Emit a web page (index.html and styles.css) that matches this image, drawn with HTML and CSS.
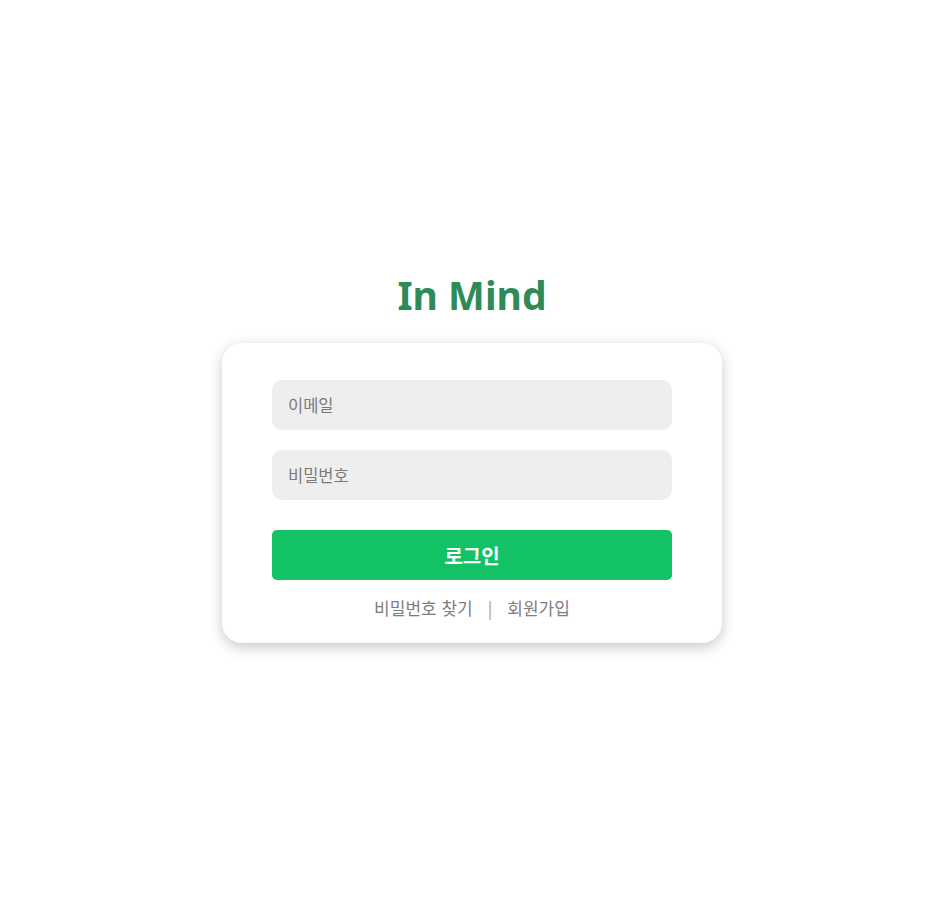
FILE: index.html
```html
<!DOCTYPE html>
<html lang="ko">
<head>
<meta charset="utf-8">
<title>In Mind</title>
<link rel="stylesheet" href="styles.css">
</head>
<body>
<main class="page">
  <h1 class="title">In Mind</h1>
  <form class="card">
    <input class="field" type="email" placeholder="이메일">
    <input class="field" type="password" placeholder="비밀번호">
    <button class="login" type="button">로그인</button>
    <div class="links">
      <a href="#" class="link">비밀번호 찾기</a>
      <span class="sep">|</span>
      <a href="#" class="link">회원가입</a>
    </div>
  </form>
</main>
</body>
</html>
```
FILE: styles.css
```css
* { box-sizing: border-box; }
html, body { margin: 0; padding: 0; background: #fff; }
body {
  font-family: "Noto Sans CJK KR", "Noto Sans", sans-serif;
  height: 914px;
}
.page {
  height: 914px;
  display: flex;
  flex-direction: column;
  align-items: center;
  padding-top: 266px;
}
.title {
  margin: 0 0 20px;
  font-size: 39px;
  line-height: 57px;
  font-weight: 700;
  color: #2e8b57;
  font-family: "Noto Sans", "Noto Sans CJK KR", sans-serif;
}
.card {
  width: 500px;
  height: 300px;
  background: #fff;
  border-radius: 20px;
  box-shadow: 0 4px 14px rgba(0, 0, 0, 0.22);
  padding: 37px 50px 0;
  display: flex;
  flex-direction: column;
}
.field {
  width: 400px;
  height: 50px;
  border: none;
  border-radius: 10px;
  background: #eeeeee;
  padding: 0 16px;
  font-family: inherit;
  font-size: 16.5px;
  color: #333;
  outline: none;
  margin-bottom: 20px;
}
.field::placeholder { color: #7a7a7a; }
.login {
  margin-top: 10px;
  width: 400px;
  height: 50px;
  border: none;
  border-radius: 5px;
  background: #12c264;
  color: #fff;
  font-family: inherit;
  font-size: 20px;
  font-weight: 700;
  cursor: pointer;
}
.links {
  margin-top: 15px;
  display: flex;
  justify-content: center;
  align-items: center;
  gap: 15px;
  font-size: 17px;
  line-height: 26px;
  color: #888;
}
.link { color: #7d7d7d; text-decoration: none; }
.sep { color: #b09a60; }
```
